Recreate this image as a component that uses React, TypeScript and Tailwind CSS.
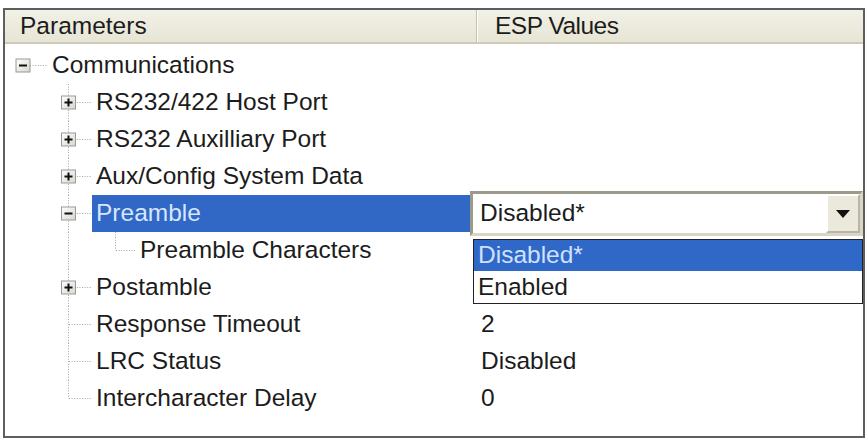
import React from "react";

type Row = {
  label: string;
  level: 0 | 1 | 2;
  box?: "plus" | "minus";
  value?: string;
  selected?: boolean;
  last?: boolean;
};

const rows: Row[] = [
  { label: "Communications", level: 0, box: "minus" },
  { label: "RS232/422 Host Port", level: 1, box: "plus" },
  { label: "RS232 Auxilliary Port", level: 1, box: "plus" },
  { label: "Aux/Config System Data", level: 1, box: "plus" },
  { label: "Preamble", level: 1, box: "minus", selected: true },
  { label: "Preamble Characters", level: 2 },
  { label: "Postamble", level: 1, box: "plus" },
  { label: "Response Timeout", level: 1, value: "2" },
  { label: "LRC Status", level: 1, value: "Disabled" },
  { label: "Intercharacter Delay", level: 1, value: "0", last: true },
];

const H = 37;
const MID = 18.5;
const DOT = "1 1.6";
const LINE = "#a3a3a3";

// expand/collapse box
const Box = ({ cx, kind }: { cx: number; kind: "plus" | "minus" }) => (
  <g>
    <defs>
      <linearGradient id="boxg" x1="0" y1="0" x2="1" y2="1">
        <stop offset="0" stopColor="#ffffff" />
        <stop offset="1" stopColor="#d8d6cc" />
      </linearGradient>
    </defs>
    <rect x={cx - 7} y={12} width={14} height={13} fill="url(#boxg)" stroke="#9a9a9a" strokeWidth={1} />
    <rect x={cx - 4} y={17.5} width={8} height={2} fill="#111" />
    {kind === "plus" && <rect x={cx - 1} y={14.5} width={2} height={8} fill="#111" />}
  </g>
);

const Gutter = ({ row }: { row: Row }) => {
  if (row.level === 0) {
    return (
      <svg width={43} height={H} className="shrink-0">
        <line x1={25} y1={MID} x2={42} y2={MID} stroke={LINE} strokeDasharray={DOT} />
        {row.box && <Box cx={18} kind={row.box} />}
      </svg>
    );
  }
  if (row.level === 1) {
    return (
      <svg width={87} height={H} className="shrink-0">
        <line x1={63.5} y1={0} x2={63.5} y2={row.last ? MID : H} stroke={LINE} strokeDasharray={DOT} />
        <line x1={64} y1={MID} x2={86} y2={MID} stroke={LINE} strokeDasharray={DOT} />
        {row.box && <Box cx={63.5} kind={row.box} />}
      </svg>
    );
  }
  return (
    <svg width={131} height={H} className="shrink-0">
      <line x1={63.5} y1={0} x2={63.5} y2={H} stroke={LINE} strokeDasharray={DOT} />
      <line x1={110.5} y1={0} x2={110.5} y2={MID} stroke={LINE} strokeDasharray={DOT} />
      <line x1={111} y1={MID} x2={130} y2={MID} stroke={LINE} strokeDasharray={DOT} />
    </svg>
  );
};

const App = () => {
  return (
    <div
      className="w-[868px] h-[440px] bg-white pt-[8px] pl-[3px] text-[24.5px] text-[#1c1c1c]"
      style={{ fontFamily: '"Liberation Sans", Arial, sans-serif' }}
    >
      <div className="relative w-[862px] h-[430px] border-2 border-[#5e5e5e] flex flex-col bg-white">
        {/* Header */}
        <div className="flex h-[34px] bg-gradient-to-b from-[#f2f1e6] to-[#e7e5d5] border-b-2 border-[#cdcab8]">
          <div className="w-[472px] pl-[15px] flex items-center border-r border-[#c4c1ae]">Parameters</div>
          <div className="flex-1 pl-[17px] flex items-center border-l border-white tracking-[-0.5px]">ESP Values</div>
        </div>

        {/* Tree rows */}
        <div className="pt-[3px]">
          {rows.map((row) => (
            <div key={row.label} className="flex h-[37px]">
              <div className="w-[473px] flex items-center">
                <Gutter row={row} />
                <div
                  className={
                    row.selected
                      ? "flex-1 h-full flex items-center pl-[4px] bg-[#3167c5] text-[#d7e6ff] mr-[4px]"
                      : "flex items-center pl-[4px]"
                  }
                >
                  {row.label}
                </div>
              </div>
              <div className="flex-1 flex items-center pl-[3px]">{row.value}</div>
            </div>
          ))}
        </div>

        {/* Combo editor over the Preamble value */}
        <div className="absolute left-[465px] top-[181px] w-[393px] h-[45px] flex border-[3px] border-t-[#9d9a89] border-l-[#9d9a89] border-b-[#d9d6c6] border-r-[#d9d6c6] bg-white">
          <div className="flex-1 flex items-center pl-[7px]">Disabled*</div>
          <div className="w-[34px] flex items-center justify-center bg-[#ebe9dc] border-2 border-t-white border-l-white border-b-[#b9b6a5] border-r-[#b9b6a5]">
            <svg width={14} height={8} viewBox="0 0 14 8">
              <path d="M0 0 H14 L7 8 Z" fill="#111" />
            </svg>
          </div>
        </div>

        {/* Dropdown list */}
        <div className="absolute left-[468px] top-[229px] w-[390px] flex flex-col border border-[#222] bg-white">
          <div className="h-[31px] flex items-center pl-[4px] bg-[#3068c8] text-[#cfe1ff]">Disabled*</div>
          <div className="h-[32px] flex items-center pl-[4px]">Enabled</div>
        </div>
      </div>
    </div>
  );
};

export default App;
